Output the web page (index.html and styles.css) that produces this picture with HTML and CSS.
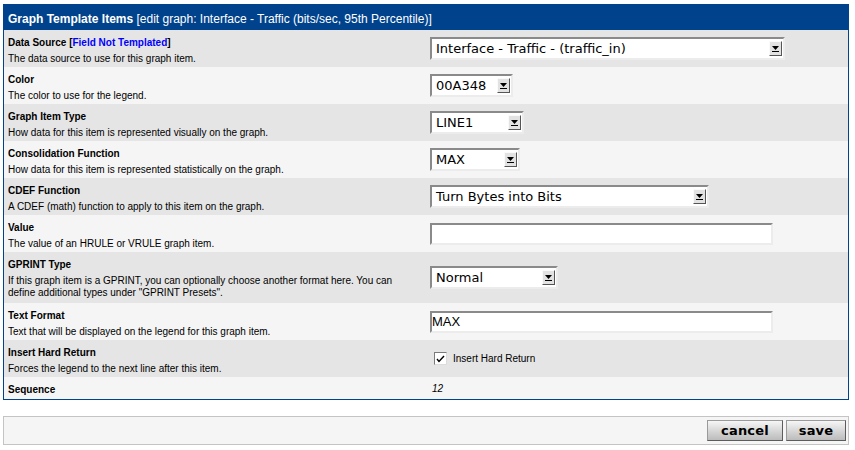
FILE: index.html
```html
<!DOCTYPE html>
<html>
<head>
<meta charset="utf-8">
<title>Graph Template Items</title>
<link rel="stylesheet" href="styles.css">
</head>
<body>
<div class="panel">
  <div class="panel-head"><b>Graph Template Items</b> [edit graph: Interface - Traffic (bits/sec, 95th Percentile)]</div>
  <div class="rows">
    <div class="row">
      <div class="label"><div class="title">Data Source [<span class="nt">Field Not Templated</span>]</div><div class="desc">The data source to use for this graph item.</div></div>
      <div class="field"><div class="sel sel-ds"><span class="sel-text">Interface - Traffic - (traffic_in)</span><span class="sel-btn"><svg width="8" height="6" viewBox="0 0 8 6"><path d="M0 0H7L3.5 4Z" fill="#000"/><rect x="0" y="5" width="7" height="1" fill="#000"/></svg></span></div></div>
    </div>
    <div class="row">
      <div class="label"><div class="title">Color</div><div class="desc">The color to use for the legend.</div></div>
      <div class="field"><div class="sel sel-color"><span class="sel-text">00A348</span><span class="sel-btn"><svg width="8" height="6" viewBox="0 0 8 6"><path d="M0 0H7L3.5 4Z" fill="#000"/><rect x="0" y="5" width="7" height="1" fill="#000"/></svg></span></div></div>
    </div>
    <div class="row">
      <div class="label"><div class="title">Graph Item Type</div><div class="desc">How data for this item is represented visually on the graph.</div></div>
      <div class="field"><div class="sel sel-type"><span class="sel-text">LINE1</span><span class="sel-btn"><svg width="8" height="6" viewBox="0 0 8 6"><path d="M0 0H7L3.5 4Z" fill="#000"/><rect x="0" y="5" width="7" height="1" fill="#000"/></svg></span></div></div>
    </div>
    <div class="row">
      <div class="label"><div class="title">Consolidation Function</div><div class="desc">How data for this item is represented statistically on the graph.</div></div>
      <div class="field"><div class="sel sel-cf"><span class="sel-text">MAX</span><span class="sel-btn"><svg width="8" height="6" viewBox="0 0 8 6"><path d="M0 0H7L3.5 4Z" fill="#000"/><rect x="0" y="5" width="7" height="1" fill="#000"/></svg></span></div></div>
    </div>
    <div class="row">
      <div class="label"><div class="title">CDEF Function</div><div class="desc">A CDEF (math) function to apply to this item on the graph.</div></div>
      <div class="field"><div class="sel sel-cdef"><span class="sel-text">Turn Bytes into Bits</span><span class="sel-btn"><svg width="8" height="6" viewBox="0 0 8 6"><path d="M0 0H7L3.5 4Z" fill="#000"/><rect x="0" y="5" width="7" height="1" fill="#000"/></svg></span></div></div>
    </div>
    <div class="row">
      <div class="label"><div class="title">Value</div><div class="desc">The value of an HRULE or VRULE graph item.</div></div>
      <div class="field"><div class="txt"></div></div>
    </div>
    <div class="row row-tall">
      <div class="label"><div class="title">GPRINT Type</div><div class="desc">If this graph item is a GPRINT, you can optionally choose another format here. You can define additional types under "GPRINT Presets".</div></div>
      <div class="field"><div class="sel sel-gprint"><span class="sel-text">Normal</span><span class="sel-btn"><svg width="8" height="6" viewBox="0 0 8 6"><path d="M0 0H7L3.5 4Z" fill="#000"/><rect x="0" y="5" width="7" height="1" fill="#000"/></svg></span></div></div>
    </div>
    <div class="row">
      <div class="label"><div class="title">Text Format</div><div class="desc">Text that will be displayed on the legend for this graph item.</div></div>
      <div class="field"><div class="txt">MAX</div></div>
    </div>
    <div class="row">
      <div class="label"><div class="title">Insert Hard Return</div><div class="desc">Forces the legend to the next line after this item.</div></div>
      <div class="field"><label class="chk"><span class="chk-box"><svg width="9" height="8" viewBox="0 0 9 8"><path d="M1 4L3 6.5L8 1" fill="none" stroke="#000" stroke-width="1.4"/></svg></span><span class="chk-label">Insert Hard Return</span></label></div>
    </div>
    <div class="row row-last">
      <div class="label"><div class="title">Sequence</div></div>
      <div class="field"><span class="seq">12</span></div>
    </div>
  </div>
</div>
<div class="actions">
  <button class="btn btn-cancel">cancel</button>
  <button class="btn btn-save">save</button>
</div>
</body>
</html>
```
FILE: styles.css
```css
html, body {
  margin: 0;
  padding: 0;
  background: #ffffff;
}
body {
  padding: 4px 6px 0 3px;
  font-family: "Liberation Sans", Arial, sans-serif;
  color: #000;
}
.panel {
  width: 846px;
  border: 1px solid #00438c;
  border-top: 0;
  box-sizing: border-box;
}
.panel-head {
  background: #00438c;
  color: #fff;
  font-size: 12px;
  height: 26px;
  box-sizing: border-box;
  padding: 5px 0 1px 5px;
  line-height: 20px;
  white-space: nowrap;
  margin: 0 -1px;
}
.row {
  display: grid;
  grid-template-columns: 426px 1fr;
  background: #e5e5e5;
}
.row:nth-child(even) {
  background: #f5f5f5;
}
.label {
  padding: 5px 8px 2px 4px;
  font-size: 10px;
}
.row-tall .label {
  padding-bottom: 4px;
}
.row-last .label {
  padding-bottom: 1px;
}
.title {
  font-weight: bold;
  line-height: 16px;
  margin-bottom: 2px;
}
.row-last .title {
  margin-bottom: 0;
}
.desc {
  line-height: 12px;
}
.nt {
  color: #0000ff;
}
.field {
  display: flex;
  align-items: center;
}
.sel {
  display: flex;
  align-items: center;
  height: 23px;
  box-sizing: border-box;
  background: #fff;
  border: 2px solid;
  border-color: #8a8a8a #ececec #ececec #8a8a8a;
  font-family: "DejaVu Sans", sans-serif;
  font-size: 13px;
}
.sel-text {
  flex: 1;
  padding-left: 4px;
  white-space: nowrap;
  overflow: hidden;
}
.sel-btn {
  width: 13px;
  height: 15px;
  box-sizing: border-box;
  margin-right: 1px;
  background: #e2e2e2;
  border: 1px solid;
  border-color: #fafafa #555 #555 #fafafa;
  display: flex;
  align-items: center;
  justify-content: center;
}
.sel-btn svg {
  display: block;
  margin-left: 1px;
}
.sel-ds { width: 355px; }
.sel-color { width: 83px; }
.sel-type { width: 94px; }
.sel-cf { width: 90px; }
.sel-cdef { width: 279px; }
.sel-gprint { width: 128px; }
.txt {
  width: 343px;
  height: 22px;
  box-sizing: border-box;
  background: #fff;
  border: 2px solid;
  border-color: #8a8a8a #ececec #ececec #8a8a8a;
  font-family: "Liberation Sans", Arial, sans-serif;
  font-size: 13px;
  line-height: 18px;
  padding-left: 0;
}
.chk {
  display: flex;
  align-items: center;
  margin-left: 4px;
  font-size: 10px;
}
.chk-box {
  width: 13px;
  height: 13px;
  box-sizing: border-box;
  background: #fff;
  border: 1px solid;
  border-color: #7a7a7a #dcdcdc #dcdcdc #7a7a7a;
  display: flex;
  align-items: center;
  justify-content: center;
}
.chk-label {
  margin-left: 6px;
}
.seq {
  font-size: 10px;
  font-style: italic;
  margin-left: 2px;
}
.actions {
  margin-top: 16px;
  width: 846px;
  height: 29px;
  box-sizing: border-box;
  border: 1px solid #c4c4c4;
  background: #f5f5f5;
  display: flex;
  justify-content: flex-end;
  align-items: center;
  gap: 3px;
  padding-right: 2px;
}
.btn {
  height: 21px;
  box-sizing: border-box;
  border: 1px solid;
  border-color: #9a9a9a #5c5c5c #5c5c5c #9a9a9a;
  background: linear-gradient(#f6f6f6, #d2d2d2 60%, #bcbcbc);
  font-family: "DejaVu Sans", Verdana, sans-serif;
  font-weight: bold;
  font-size: 13px;
  color: #000;
  padding: 0;
  margin: 0;
  letter-spacing: 0.2px;
}
.btn-cancel { width: 76px; }
.btn-save { width: 60px; }
```
